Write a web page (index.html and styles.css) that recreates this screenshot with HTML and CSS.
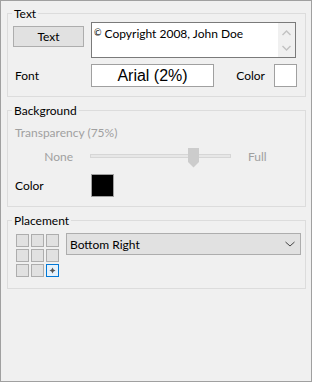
FILE: index.html
```html
<!DOCTYPE html>
<html lang="en">
<head>
    <meta charset="UTF-8">
    <meta name="viewport" content="width=device-width, initial-scale=1.0">
    <title>Watermark</title>
    <link rel="stylesheet" href="styles.css">
</head>
<body>
    <div id="window">
        <fieldset class="group" id="group-text">
            <legend>Text</legend>
            <div class="row row-top">
                <button class="btn" id="btn-text">Text</button>
                <div class="textbox">
                    <div class="textbox-value"><span class="copy">©</span> Copyright 2008, John Doe</div>
                    <div class="scrollbar">
                        <svg width="9" height="6" viewBox="0 0 9 6"><path d="M0.5 5 L4.5 1 L8.5 5" fill="none" stroke="#c2c2c2" stroke-width="1.4"/></svg>
                        <svg width="9" height="6" viewBox="0 0 9 6"><path d="M0.5 1 L4.5 5 L8.5 1" fill="none" stroke="#c2c2c2" stroke-width="1.4"/></svg>
                    </div>
                </div>
            </div>
            <div class="row row-font">
                <span class="label label-font">Font</span>
                <div class="font-box">Arial (2%)</div>
                <span class="label label-color">Color</span>
                <div class="swatch swatch-white"></div>
            </div>
        </fieldset>

        <fieldset class="group" id="group-bg">
            <legend>Background</legend>
            <div class="disabled transparency">Transparency (75%)</div>
            <div class="row row-slider">
                <span class="disabled slider-none">None</span>
                <div class="track">
                    <svg class="thumb" width="11" height="20" viewBox="0 0 11 20"><polygon points="0,0 11,0 11,14 5.5,19.5 0,14" fill="#cccccc"/></svg>
                </div>
                <span class="disabled slider-full">Full</span>
            </div>
            <div class="row row-bgcolor">
                <span class="label label-bgcolor">Color</span>
                <div class="swatch swatch-black"></div>
            </div>
        </fieldset>

        <fieldset class="group" id="group-place">
            <legend>Placement</legend>
            <div class="row row-place">
                <div class="pos-grid">
                    <div class="pos"></div>
                    <div class="pos"></div>
                    <div class="pos"></div>
                    <div class="pos"></div>
                    <div class="pos"></div>
                    <div class="pos"></div>
                    <div class="pos"></div>
                    <div class="pos"></div>
                    <div class="pos pos-active">
                        <svg width="7" height="7" viewBox="0 0 7 7"><path d="M3.5 0.5 L4.5 2.5 L6.5 3.5 L4.5 4.5 L3.5 6.5 L2.5 4.5 L0.5 3.5 L2.5 2.5 Z" fill="#555555"/></svg>
                    </div>
                </div>
                <div class="combo">
                    <span>Bottom Right</span>
                    <svg width="10" height="6" viewBox="0 0 10 6"><path d="M0.5 1 L5 5 L9.5 1" fill="none" stroke="#444444" stroke-width="1"/></svg>
                </div>
            </div>
        </fieldset>
    </div>
</body>
</html>
```

FILE: styles.css
```css
* {
    box-sizing: border-box;
}
body {
    margin: 0;
    font-family: Lato, "Liberation Sans", sans-serif;
    font-size: 12px;
    color: #000;
}
#window {
    width: 312px;
    height: 382px;
    border: 1px solid #a0a0a0;
    background-color: #f0f0f0;
    padding: 0px 5px 0px 6px;
}
.group {
    border: 1px solid #dcdcdc;
    margin: 6px 0px 0px 0px;
    padding: 0px;
    min-width: 0;
}
#group-text {
    margin-top: 5px;
    padding: 1px 0px 9px 0px;
}
#group-bg {
    padding: 7px 0px 9px 0px;
}
#group-place {
    padding: 5px 0px 11px 0px;
}
.group > legend {
    margin-left: 4px;
    padding: 0px 2px;
    line-height: 15px;
    font-size: 12px;
}
.row {
    display: flex;
    align-items: center;
}
.row-top {
    align-items: flex-start;
}
.btn {
    margin: 4px 0px 0px 5px;
    width: 71px;
    height: 21px;
    border: 1px solid #adadad;
    background-color: #e1e1e1;
    font-family: inherit;
    font-size: 12px;
    color: #000;
    padding: 0px;
}
.textbox {
    margin-left: 7px;
    width: 205px;
    height: 36px;
    border: 1px solid #7a7a7a;
    background-color: #fff;
    display: flex;
}
.textbox-value {
    flex: 1;
    padding: 2px 0px 0px 2px;
    line-height: 15px;
}
.copy {
    font-size: 9px;
    vertical-align: 2px;
}
.scrollbar {
    width: 17px;
    background-color: #f0f0f0;
    display: flex;
    flex-direction: column;
    align-items: center;
    justify-content: space-between;
    padding: 7px 0px 6px 0px;
}
.row-font {
    margin-top: 6px;
    height: 23px;
}
.label-font {
    width: 76px;
    margin-left: 7px;
}
.font-box {
    width: 123px;
    height: 23px;
    border: 1px solid #a0a0a0;
    background-color: #fff;
    font-family: "Liberation Sans", Arial, sans-serif;
    font-size: 16px;
    line-height: 21px;
    text-align: center;
}
.label-color {
    width: 60px;
    padding-right: 9px;
    text-align: right;
}
.swatch {
    width: 23px;
    height: 23px;
    border: 1px solid #a0a0a0;
}
.swatch-white {
    background-color: #fff;
}
.swatch-black {
    background-color: #000;
}
.disabled {
    color: #a0a0a0;
}
.transparency {
    margin-left: 7px;
    line-height: 15px;
}
.row-slider {
    margin-top: 6px;
    height: 20px;
}
.slider-none {
    width: 65px;
    text-align: right;
}
.track {
    position: relative;
    margin-left: 17px;
    width: 141px;
    height: 4px;
    border: 1px solid #d6d6d6;
    background-color: #e7e7e7;
}
.thumb {
    position: absolute;
    left: 97px;
    top: -7px;
}
.slider-full {
    margin-left: 17px;
}
.row-bgcolor {
    margin-top: 8px;
}
.label-bgcolor {
    width: 76px;
    margin-left: 7px;
}
.row-place {
    align-items: flex-start;
}
.pos-grid {
    margin: 1px 0px 0px 8px;
    display: grid;
    grid-template-columns: repeat(3, 13px);
    grid-auto-rows: 13px;
    gap: 2px;
}
.pos {
    border: 1px solid #adadad;
    background-color: #e1e1e1;
}
.pos-active {
    border-color: #0078d7;
    background-color: #e5f1fb;
    display: flex;
    align-items: center;
    justify-content: center;
}
.combo {
    margin-left: 7px;
    width: 235px;
    height: 22px;
    border: 1px solid #adadad;
    background-color: #e1e1e1;
    display: flex;
    align-items: center;
    justify-content: space-between;
    padding: 0px 5px 0px 3px;
    font-size: 12px;
}
```
